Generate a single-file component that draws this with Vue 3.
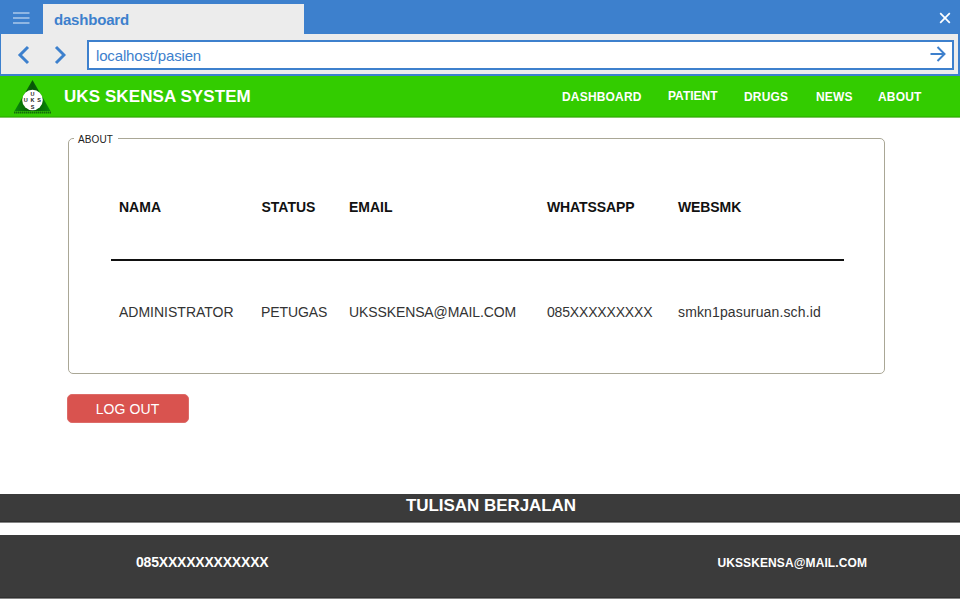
<script setup>
const links = ['DASHBOARD', 'PATIENT', 'DRUGS', 'NEWS', 'ABOUT']
const headings = ['NAMA', 'STATUS', 'EMAIL', 'WHATSSAPP', 'WEBSMK']
const values = ['ADMINISTRATOR', 'PETUGAS', 'UKSSKENSA@MAIL.COM', '085XXXXXXXXX', 'smkn1pasuruan.sch.id']
</script>

<template>
  <div class="window">
    <header class="tabs">
      <div class="menu">
        <svg width="18" height="14" viewBox="0 0 18 14">
          <path d="M1 2H17.500M1 7H17.500M1 12H17.500" stroke="#aac8ea" stroke-width="1.700" />
        </svg>
      </div>
      <div class="tab">dashboard</div>
      <svg class="close" width="12" height="12" viewBox="0 0 12 12">
        <path d="M1.200 1.200L10.800 10.800M10.800 1.200L1.200 10.800" stroke="#fff" stroke-width="1.700" />
      </svg>
    </header>
    <div class="toolbar">
      <svg class="arrows" width="50" height="20" viewBox="0 0 50 20">
        <path d="M12 2L4 10L12 18M40 2L48 10L40 18" fill="none" stroke="#3d80cd" stroke-width="3" />
      </svg>
      <div class="address">
        <span>localhost/pasien</span>
        <svg width="16" height="16" viewBox="0 0 16 16">
          <path d="M0.500 8H14.500M7.500 1L14.500 8L7.500 15" fill="none" stroke="#3d80cd" stroke-width="2" />
        </svg>
      </div>
    </div>
    <nav class="navbar">
      <svg class="logo" width="38" height="36" viewBox="0 0 38 36">
        <defs>
          <linearGradient id="leaf" x1="0" y1="0" x2="1" y2="0">
            <stop offset="0" stop-color="#078b07" />
            <stop offset=".5" stop-color="#075507" />
            <stop offset="1" stop-color="#078b07" />
          </linearGradient>
        </defs>
        <path d="M18.500 1L36.500 32H0.500Z" fill="url(#leaf)" />
        <circle cx="18.500" cy="21" r="10.300" fill="#fff" />
        <g class="logo-text">
          <text x="18.500" y="17">U</text>
          <text x="11.700" y="23.200">U</text>
          <text x="18.500" y="23.200">K</text>
          <text x="25" y="23.200">S</text>
          <text x="18.500" y="29.500">S</text>
        </g>
        <path d="M0 33.500H37" stroke="#146b0c" stroke-width="2" stroke-dasharray="1.500 .5" />
      </svg>
      <h1>UKS SKENSA SYSTEM</h1>
      <ul>
        <li v-for="link in links" :key="link" :class="link.toLowerCase()">{{ link }}</li>
      </ul>
    </nav>
    <main>
      <fieldset>
        <legend>ABOUT</legend>
        <div class="row head">
          <span v-for="h in headings" :key="h">{{ h }}</span>
        </div>
        <div class="row body">
          <span v-for="v in values" :key="v">{{ v }}</span>
        </div>
      </fieldset>
      <button>LOG OUT</button>
    </main>
    <div class="ticker">TULISAN BERJALAN</div>
    <footer>
      <span class="phone">085XXXXXXXXXXXX</span>
      <span class="mail">UKSSKENSA@MAIL.COM</span>
    </footer>
  </div>
</template>

<style>
body {
  background: #fff;
}
</style>

<style scoped>
.window {
  display: flex;
  flex-direction: column;
  width: 960px;
  height: 600px;
  overflow: hidden;
  box-sizing: border-box;
  font-family: "Liberation Sans", Arial, sans-serif;
  background: #fff;
}
.window * {
  box-sizing: border-box;
}
svg {
  display: block;
}
.tabs {
  display: flex;
  align-items: center;
  height: 34px;
  background: #3d80cd;
}
.menu {
  width: 43px;
  padding: 2px 0 0 12px;
}
.tab {
  align-self: flex-end;
  width: 261px;
  height: 30px;
  padding-left: 11px;
  background: #ececec;
  color: #3d80cd;
  font-size: 15px;
  font-weight: bold;
  line-height: 32px;
  letter-spacing: -0.200px;
}
.close {
  margin: 2px 9px 0 auto;
}
.toolbar {
  display: flex;
  align-items: center;
  height: 42px;
  padding: 0 4px 0 15px;
  background: #ececec;
  border: solid #3d80cd;
  border-width: 0 2px 2px 1px;
}
.arrows {
  margin-top: 1px;
}
.address {
  display: flex;
  flex: 1;
  align-items: center;
  justify-content: space-between;
  height: 30px;
  margin: 2px 0 0 21px;
  padding: 0 6px 0 7px;
  border: 2px solid #3d80cd;
  background: #fff;
  color: #3d80cd;
  font-size: 15px;
  letter-spacing: -0.160px;
}
.address svg {
  margin-bottom: 2px;
}
.navbar {
  display: flex;
  height: 42px;
  padding-left: 14px;
  background: #33cc00;
  border-bottom: 1px solid #7fc562;
  box-shadow: inset 0 -1px #2eb900;
  color: #fff;
}
.logo {
  flex: none;
  margin-top: 3px;
}
.logo-text {
  font-size: 5.5px;
  font-weight: bold;
  fill: #222;
  text-anchor: middle;
}
h1 {
  flex: none;
  width: 510px;
  margin: 0;
  padding-left: 12px;
  font-size: 17px;
  line-height: 41px;
  letter-spacing: 0.080px;
}
ul {
  display: grid;
  grid-template-columns: 106px 76px 72px 62px auto;
  margin: 0;
  padding: 0;
  list-style: none;
  font-size: 12px;
  font-weight: bold;
  line-height: 42px;
  letter-spacing: 0.180px;
}
.patient {
  line-height: 40px;
  letter-spacing: 0;
}
main {
  height: 376px;
  padding: 14px 75px 0 68px;
}
fieldset {
  height: 242px;
  margin: 0;
  padding: 0 40px 0 42px;
  border: 1px solid #aaa796;
  border-radius: 5px;
}
legend {
  height: 13px;
  margin-left: -37px;
  padding: 0 5px 0 4px;
  font-size: 10px;
  line-height: 15px;
  letter-spacing: 0.100px;
  color: #222;
}
.row {
  display: grid;
  grid-template-columns: 142.500px 87.500px 198px 131px auto;
  height: 104px;
  padding-left: 8px;
  font-size: 14px;
  line-height: 102px;
  color: #333;
}
.head {
  height: 116px;
  border-bottom: 2px solid #111;
  line-height: 124px;
  font-weight: bold;
  color: #111;
}
.body span:nth-child(2) {
  margin-left: -0.500px;
  letter-spacing: -0.080px;
}
.body span:nth-child(3) {
  letter-spacing: -0.110px;
}
.body span:nth-child(4) {
  letter-spacing: -0.170px;
}
.body span:nth-child(5) {
  letter-spacing: 0.140px;
}
.head span:nth-child(n + 4) {
  letter-spacing: -0.100px;
}
button {
  display: block;
  width: 122px;
  height: 29px;
  margin: 20px 0 0 -1px;
  padding: 0 1px 0 0;
  border: 1px solid #dd6b68;
  border-radius: 5px;
  background: #d9534f;
  color: #fff;
  font: 14px/29px "Liberation Sans", Arial, sans-serif;
  letter-spacing: 0.100px;
}
.ticker {
  height: 29px;
  padding-left: 22px;
  border-bottom: 1px solid #858585;
  box-shadow: inset 0 -1px #303030;
  background: #3b3b3b;
  color: #fff;
  font-size: 17px;
  font-weight: bold;
  line-height: 23px;
  letter-spacing: -0.050px;
  text-align: center;
}
footer {
  display: flex;
  justify-content: space-between;
  height: 64px;
  margin-top: 12px;
  padding: 0 93px 0 136px;
  border-bottom: 1px solid #858585;
  box-shadow: inset 0 -1px #303030;
  background: #3b3b3b;
  color: #fff;
  font-weight: bold;
  line-height: 55px;
}
.phone {
  font-size: 14px;
  letter-spacing: -0.200px;
}
.mail {
  font-size: 12px;
  line-height: 56px;
  letter-spacing: 0.100px;
}
</style>
